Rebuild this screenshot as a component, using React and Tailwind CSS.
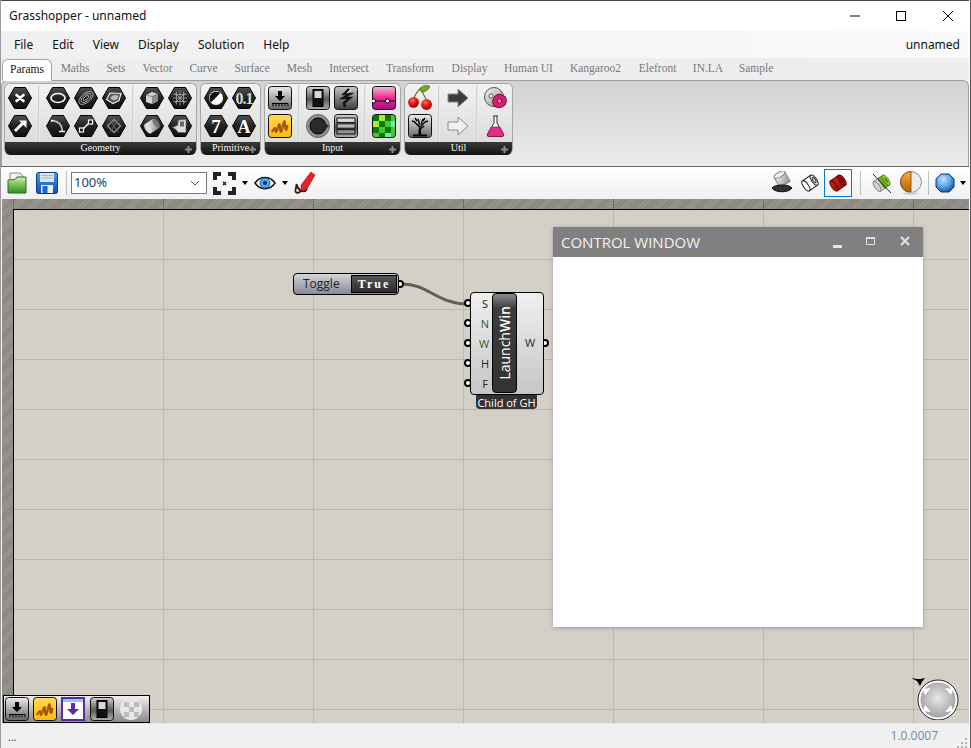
const menus = ["File", "Edit", "View", "Display", "Solution", "Help"];
const tabs = [
  ["Maths", "w-[46px]"],
  ["Sets", "w-[36px]"],
  ["Vector", "w-[47px]"],
  ["Curve", "w-[45px]"],
  ["Surface", "w-[52px]"],
  ["Mesh", "w-[43px]"],
  ["Intersect", "w-[56px]"],
  ["Transform", "w-[66px]"],
  ["Display", "w-[53px]"],
  ["Human UI", "w-[65px]"],
  ["Kangaroo2", "w-[69px]"],
  ["Elefront", "w-[55px]"],
  ["IN.LA", "w-[46px]"],
  ["Sample", "w-[50px]"],
];
const serif = "font-['Liberation_Serif',serif]";

function Defs() {
  return (
    <svg className="absolute w-0 h-0">
      <defs>
        <linearGradient id="hexFill" x1="0" y1="0" x2="0" y2="1">
          <stop offset="0" stopColor="#505050" />
          <stop offset="0.5" stopColor="#222" />
          <stop offset="1" stopColor="#101010" />
        </linearGradient>
        <linearGradient id="greyBtn" x1="0" y1="0" x2="0" y2="1">
          <stop offset="0" stopColor="#ececec" />
          <stop offset="1" stopColor="#666" />
        </linearGradient>
        <linearGradient id="boltBtn" x1="0" y1="0" x2="0" y2="1">
          <stop offset="0" stopColor="#c8c8c8" />
          <stop offset="1" stopColor="#3c3c3c" />
        </linearGradient>
        <linearGradient id="darkBtn" x1="0" y1="0" x2="0" y2="1">
          <stop offset="0" stopColor="#d4d4d4" />
          <stop offset="0.55" stopColor="#5a5a5a" />
          <stop offset="1" stopColor="#b0b0b0" />
        </linearGradient>
        <linearGradient id="yellowBtn" x1="0" y1="0" x2="0" y2="1">
          <stop offset="0" stopColor="#ffdc50" />
          <stop offset="1" stopColor="#fdb90f" />
        </linearGradient>
        <linearGradient id="pinkBtn" x1="0" y1="0" x2="0" y2="1">
          <stop offset="0" stopColor="#eec0d8" />
          <stop offset="0.5" stopColor="#f0258f" />
          <stop offset="1" stopColor="#a01478" />
        </linearGradient>
        <linearGradient id="leafGreen" x1="0" y1="0" x2="0" y2="1">
          <stop offset="0" stopColor="#dfe7dc" />
          <stop offset="0.35" stopColor="#8ed063" />
          <stop offset="1" stopColor="#2f8f22" />
        </linearGradient>
        <linearGradient id="floppy" x1="0" y1="0" x2="0" y2="1">
          <stop offset="0" stopColor="#4d9bea" />
          <stop offset="1" stopColor="#0e4fae" />
        </linearGradient>
        <linearGradient id="redTube" x1="0" y1="0" x2="1" y2="1">
          <stop offset="0" stopColor="#e02a1c" />
          <stop offset="1" stopColor="#8a0400" />
        </linearGradient>
        <linearGradient id="greySolid" x1="0" y1="0" x2="1" y2="1">
          <stop offset="0" stopColor="#f8f8f8" />
          <stop offset="1" stopColor="#8c8c8c" />
        </linearGradient>
        <linearGradient id="orangeBall" x1="0" y1="0" x2="0" y2="1">
          <stop offset="0" stopColor="#f4b040" />
          <stop offset="1" stopColor="#b85a06" />
        </linearGradient>
        <radialGradient id="blueBall" cx="0.4" cy="0.3" r="0.8">
          <stop offset="0" stopColor="#c5e6ff" />
          <stop offset="0.55" stopColor="#4f9fe6" />
          <stop offset="1" stopColor="#123f9c" />
        </radialGradient>
        <radialGradient id="navDisc" cx="0.5" cy="0.45" r="0.55">
          <stop offset="0" stopColor="#e8e8e8" />
          <stop offset="1" stopColor="#a2a2a2" />
        </radialGradient>
        <radialGradient id="cherry" cx="0.4" cy="0.3" r="0.8">
          <stop offset="0" stopColor="#ff6a5a" />
          <stop offset="0.5" stopColor="#dc1414" />
          <stop offset="1" stopColor="#780404" />
        </radialGradient>
      </defs>
    </svg>
  );
}

function Hex({ children }) {
  return (
    <svg width="24" height="22" viewBox="0 0 24 22">
      <polygon points="0.5,11 6.5,0.5 17.5,0.5 23.5,11 17.5,21.5 6.5,21.5" fill="url(#hexFill)" stroke="#000" />
      {children}
    </svg>
  );
}

function Btn({ fill = "url(#greyBtn)", children }) {
  return (
    <svg width="24" height="24" viewBox="0 0 24 24">
      <rect x="0.5" y="0.5" width="23" height="23" rx="3" fill={fill} stroke="#111" />
      {children}
    </svg>
  );
}

const ruler = (
  <path d="M4 17.5h16M5 17.5v3M8 17.5v3M11 17.5v3M14 17.5v3M17 17.5v3M20 17.5v3" stroke="#000" strokeWidth="1" fill="none" />
);

const icons = {
  point: <Hex><path d="M8.5 8l7 6M15.5 8l-7 6" stroke="#fff" strokeWidth="2.6" strokeLinecap="round" /></Hex>,
  vector: <Hex><path d="M7 16L14.500 8.500" stroke="#fff" strokeWidth="3" /><path d="M11 5.500h7.500V13z" fill="#fff" /></Hex>,
  circle: <Hex><ellipse cx="12" cy="11" rx="7" ry="4.500" fill="none" stroke="#fff" strokeWidth="1.600" /></Hex>,
  arc: <Hex><g fill="none" stroke="#b8b8b8" strokeWidth=".8"><ellipse cx="12" cy="11" rx="8.500" ry="4.500" transform="rotate(-40 12 11)" /><ellipse cx="12" cy="11" rx="6" ry="3" transform="rotate(-40 12 11)" /><ellipse cx="12" cy="11" rx="3.500" ry="1.500" transform="rotate(-40 12 11)" /></g></Hex>,
  surface: <Hex><path d="M4.500 12.500L8 6l11 .500 -2 7-6 3z" fill="#555" stroke="#e8e8e8" strokeWidth="1.200" /><path d="M8 11l3.500-3 5 .500-1 3.500-4 1.500z" fill="#bbb" /></Hex>,
  curve: <Hex><path d="M6 5.500c6 .5 10 4 10.500 10.500" fill="none" stroke="#ccc" strokeWidth="1.600" /><path d="M13 16.500h6" stroke="#fff" strokeWidth="1.400" /><path d="M5 4.500l3 1-3 1.500z" fill="#fff" /></Hex>,
  line: <Hex><path d="M8 15L16 7" stroke="#fff" strokeWidth="1.400" /><rect x="5.500" y="13" width="4" height="4" fill="#111" stroke="#fff" strokeWidth="1.200" /><rect x="14.500" y="5" width="4" height="4" fill="#111" stroke="#fff" strokeWidth="1.200" /></Hex>,
  plane: <Hex><path d="M12 4.500l6.500 6.500-6.500 6.500L5.500 11z" fill="none" stroke="#8e8e8e" strokeWidth="1.400" /><path d="M8 4.500l8 13M16 4.500l-8 13" stroke="#666" strokeWidth="1" /></Hex>,
  box: <Hex><path d="M6 8l6-3 6 2v7l-6 3-6-2z" fill="#d4d4d4" /><path d="M12 9.500V17l6-3V7z" fill="#8e8e8e" /><path d="M6 8l6 1.500L18 7" stroke="#555" fill="none" strokeWidth=".6" /></Hex>,
  mesh: <Hex><g stroke="#a8a8a8" strokeWidth=".8" fill="none"><path d="M5 11h14M12 3.500v15M7 6l10 10M17 6L7 16M8.500 4.500v13M15.500 4.500v13M5.500 7.500h13M5.500 14.500h13" /></g></Hex>,
  brep: <Hex><g transform="rotate(-35 12 11)"><rect x="7" y="5.500" width="10" height="11" fill="url(#greySolid)" /><ellipse cx="7" cy="11" rx="2.500" ry="5.500" fill="#ddd" /><ellipse cx="17" cy="11" rx="2.500" ry="5.500" fill="#777" /></g></Hex>,
  geo: <Hex><path d="M4.500 12.500l5-2 1-5.500 7.500-.500v13H10l-2-3z" fill="#ddd" stroke="#666" strokeWidth=".7" /><path d="M12 6.500h4v5h-4z" fill="#666" /></Hex>,
  boolean: <Hex><circle cx="12" cy="11" r="7" fill="#fff" /><path d="M7 15.500c-2.300-3-1.600-6.700.6-9 2.400-2.300 6-2.500 8.700-.5z" fill="#111" /></Hex>,
  number: <Hex><text x="12" y="16.500" textAnchor="middle" fill="#d8d8d8" className={serif} fontSize="16" fontWeight="700" letterSpacing="-1">0.1</text></Hex>,
  integer: <Hex><text x="12" y="18" textAnchor="middle" fill="#fff" className={serif} fontSize="19" fontWeight="700">7</text></Hex>,
  text: <Hex><text x="12" y="17.500" textAnchor="middle" fill="#fff" className={serif} fontSize="18" fontWeight="700">A</text></Hex>,
  slider: <Btn>{ruler}<path d="M10 5h4v5h3l-5 5-5-5h3z" fill="#000" /></Btn>,
  scribble: <Btn fill="url(#yellowBtn)"><path d="M4 18c1-2 2-4 3-4 1 0 0 4 1 4 1.500 0 2-8 3.500-8 1 0 0 8 1.500 8 1.500 0 2-11 3.500-11 1 0 0 9 1.500 9 .8 0 1-3 1.500-5" fill="none" stroke="#a8560c" strokeWidth="2.200" strokeLinejoin="round" /></Btn>,
  toggle: <Btn fill="url(#darkBtn)"><rect x="7" y="3.500" width="10" height="17" fill="#111" stroke="#000" /><rect x="8.500" y="5" width="7" height="7" fill="#d8d8d8" /></Btn>,
  bolt: <Btn fill="url(#boltBtn)"><path d="M15 3l-5 5h6l-7 4h7l-6 5 1 4" fill="none" stroke="#111" strokeWidth="2.400" /><path d="M17 4l-4 3" stroke="#fff" strokeWidth="1" /></Btn>,
  gradient: <Btn fill="url(#pinkBtn)"><path d="M0 15h24" stroke="#111" /><circle cx="1.500" cy="15" r="2" fill="#fff" stroke="#000" /><circle cx="15.500" cy="15" r="2" fill="#fff" stroke="#000" /></Btn>,
  dial: (
    <svg width="24" height="24" viewBox="0 0 24 24">
      <circle cx="12" cy="12" r="11.500" fill="#8e8e8e" stroke="#666" />
      <circle cx="12" cy="12" r="8" fill="#2a2a2a" stroke="#000" />
      <path d="M18 8l5 4-5 4z" fill="#2a2a2a" />
    </svg>
  ),
  list: <Btn fill="url(#darkBtn)"><rect x="3" y="4" width="18" height="4.400" fill="#dcdcdc" stroke="#111" /><rect x="3" y="9.800" width="18" height="4.400" fill="#b5b5b5" stroke="#111" /><rect x="3" y="15.600" width="18" height="4.400" fill="#8e8e8e" stroke="#111" /></Btn>,
  checker: (
    <Btn fill="#46c832">
      <path d="M1 1h6v6H1zM13 1h6v6h-6zM7 7h6v6H7zM1 13h6v6H1zM13 13h6v6h-6zM7 19h6v4H7z" fill="#0d7a06" />
      <path d="M19 7h4v6h-4zM13 19h6v4h-6z" fill="#6ce8a8" />
      <path d="M7 1h6v6H7zM1 7h6v6H1z" fill="#a8ec2a" />
    </Btn>
  ),
  cherry: (
    <svg width="26" height="26" viewBox="0 0 24 24">
      <path d="M6 13C8 8 10 5 13 3c1 4 3 7 5 11" fill="none" stroke="#5d6b22" strokeWidth="1" />
      <path d="M12 3c3-3 7-3 9-2-1 4-5 6-8 5z" fill="#74a92a" stroke="#2b5a10" strokeWidth=".6" />
      <circle cx="6" cy="16" r="5" fill="url(#cherry)" />
      <circle cx="18" cy="18" r="5" fill="url(#cherry)" />
    </svg>
  ),
  tree: (
    <Btn fill="url(#greyBtn)">
      <path d="M11 21l.6-8-5-5M12 13l5-5M12.600 21l-.4-6 4-3M11.600 11L10 5M13 10l2-5M7 8L4 7M17 8l3-1M9 7L7 4M15 7l2-3" fill="none" stroke="#000" strokeWidth="1.400" />
      <path d="M5 21.500h14" stroke="#000" strokeWidth="2" />
    </Btn>
  ),
  arrowDark: (
    <svg width="24" height="24" viewBox="0 0 24 24">
      <path d="M2 8h10V3l10 9-10 9v-5H2z" fill="#3c3c3c" stroke="#888" />
    </svg>
  ),
  arrowLight: (
    <svg width="24" height="24" viewBox="0 0 24 24">
      <path d="M2 8h10V3l10 9-10 9v-5H2z" fill="#f0f0f0" stroke="#8c8c8c" />
    </svg>
  ),
  disc: (
    <svg width="24" height="24" viewBox="0 0 24 24">
      <circle cx="10" cy="11" r="9.500" fill="url(#greySolid)" stroke="#555" />
      <circle cx="7" cy="10" r="2" fill="#fff" stroke="#555" />
      <ellipse cx="15.500" cy="15" rx="7" ry="6.500" transform="rotate(-35 15.500 15)" fill="#d81f72" stroke="#6d0c3c" />
      <circle cx="15.500" cy="15" r="2.200" fill="#f8a" stroke="#6d0c3c" />
    </svg>
  ),
  flask: (
    <svg width="24" height="24" viewBox="0 0 24 24">
      <path d="M9 2h5M10 2v7L3.500 20c-.6 1.500 0 2.500 1.500 2.500h13c1.500 0 2-1 1.500-2.500L13 9V2" fill="#f4f4f4" stroke="#333" />
      <path d="M7 13h9l3.500 7.500c.4 1 0 2-1.500 2H5c-1.500 0-2-1-1.500-2z" fill="#e32c86" stroke="#7a1048" strokeWidth=".6" />
    </svg>
  ),
};

function Sep() {
  return <div className="w-[2px] mx-[4px] my-[1px] bg-gradient-to-r from-[#c4c4c4] to-[#f6f6f6]" />;
}

function Col({ top, bottom }) {
  return (
    <div className="w-[28px] flex flex-col">
      <div className="h-[28px] flex items-center justify-center">{icons[top]}</div>
      <div className="h-[28px] flex items-center justify-center">{icons[bottom]}</div>
    </div>
  );
}

function Panel({ label, className, children }) {
  return (
    <div className={`flex flex-col h-[72px] rounded-[6px] overflow-hidden border-x border-t border-[#a6a6a6] ${className}`}>
      <div className="h-[58px] pl-[1px] pr-[2px] flex bg-gradient-to-b from-[#f2f2f2] to-[#dcdcdc]">{children}</div>
      <div className="h-[13px] relative flex items-center justify-center bg-gradient-to-b from-[#3a3a3a] to-[#141414]">
        <span className={`${serif} text-[10px] leading-none text-[#f2f2f2] -mt-[1px]`}>{label}</span>
        <svg className="absolute right-[3px] top-[3px]" width="9" height="9" viewBox="0 0 9 9">
          <path d="M4.500 1v7M1 4.500h7" stroke="#8c8c8c" strokeWidth="2" />
        </svg>
      </div>
    </div>
  );
}

function Tube({ body, top, stroke }) {
  return (
    <svg width="24" height="24" viewBox="0 0 24 24">
      <g transform="rotate(-35 12 12)">
        <rect x="7" y="6" width="10" height="12" fill={body} stroke={stroke} />
        <ellipse cx="7" cy="12" rx="2.500" ry="6" fill={body} stroke={stroke} />
        <ellipse cx="17" cy="12" rx="2.500" ry="6" fill={top} stroke={stroke} />
        <ellipse cx="17" cy="12" rx="1.200" ry="3" fill={body} stroke={stroke} />
      </g>
    </svg>
  );
}

function Caret({ className }) {
  return <div className={`w-0 h-0 border-x-[3.500px] border-t-[4px] border-x-transparent border-t-black ${className}`} />;
}

function TitleBar() {
  return (
    <div className="h-[31px] shrink-0 bg-white border-t border-[#444] flex items-center pl-[8px] pb-[1px]">
      <span className="text-[12px] text-[#111]">Grasshopper - unnamed</span>
      <div className="ml-auto flex items-center">
        <svg width="46" height="30" viewBox="0 0 46 30"><path d="M19 15h10" stroke="#000" /></svg>
        <svg width="46" height="30" viewBox="0 0 46 30"><rect x="19.500" y="10.500" width="9" height="9" fill="none" stroke="#000" /></svg>
        <svg width="46" height="30" viewBox="0 0 46 30"><path d="M20 10l10 10M30 10L20 20" stroke="#000" /></svg>
      </div>
    </div>
  );
}

function MenuBar() {
  return (
    <div className="h-[27px] shrink-0 bg-gradient-to-r from-[#f0f0f0] to-[#fafafa] flex items-center pl-[13px] pr-[9px]">
      <div className="flex gap-[19px] text-[12px] text-[#111]">
        {menus.map((m) => (
          <span key={m}>{m}</span>
        ))}
      </div>
      <span className="ml-auto text-[12px] text-[#111]">unnamed</span>
    </div>
  );
}

function Tabs() {
  return (
    <div className={`h-[22px] shrink-0 bg-[#eeeeee] flex items-end pl-[1px] ${serif} text-[11.500px] text-[#7a7a7a]`}>
      <div className="relative z-10 -mb-[1px] w-[50px] h-[22px] bg-white border-x border-t border-[#a4a4a4] rounded-t-[6px] flex items-center justify-center text-[#111] border-b border-b-white">
        Params
      </div>
      {tabs.map(([label, w]) => (
        <div key={label} className={`${w} h-[22px] flex items-center justify-center`}>
          {label}
        </div>
      ))}
    </div>
  );
}

function Ribbon() {
  return (
    <div className="h-[86px] shrink-0 rounded-t-[6px] border-t border-x border-[#a0a0a0] bg-gradient-to-b from-[#d2d2d2] to-[#ececec] flex items-start pt-[2px] pl-[2px]">
      <Panel label="Geometry">
        <Col top="point" bottom="vector" />
        <Sep />
        <Col top="circle" bottom="curve" />
        <Col top="arc" bottom="line" />
        <Col top="surface" bottom="plane" />
        <Sep />
        <Col top="box" bottom="brep" />
        <Col top="mesh" bottom="geo" />
      </Panel>
      <Panel label="Primitive" className="ml-[3px]">
        <Col top="boolean" bottom="integer" />
        <Col top="number" bottom="text" />
      </Panel>
      <Panel label="Input" className="ml-[3px]">
        <Col top="slider" bottom="scribble" />
        <Sep />
        <Col top="toggle" bottom="dial" />
        <Col top="bolt" bottom="list" />
        <Sep />
        <Col top="gradient" bottom="checker" />
      </Panel>
      <Panel label="Util" className="ml-[3px]">
        <Col top="cherry" bottom="tree" />
        <Sep />
        <Col top="arrowDark" bottom="arrowLight" />
        <Sep />
        <Col top="disc" bottom="flask" />
      </Panel>
    </div>
  );
}

function Toolbar() {
  return (
    <div className="h-[33px] shrink-0 border-t border-[#666] bg-gradient-to-b from-white to-[#f0f0f0] flex items-center pl-[6px] pr-[3px]">
      <svg width="20" height="22" viewBox="0 0 20 22">
        <path d="M3 1h10l3 3v6H3z" fill="#f2f2f2" stroke="#888" />
        <path d="M1 8l7-.500 2-2.500h9v16H1z" fill="url(#leafGreen)" stroke="#2a6d1c" />
      </svg>
      <svg className="ml-[9px]" width="22" height="22" viewBox="0 0 22 22">
        <rect x="0.500" y="0.500" width="21" height="21" rx="2" fill="url(#floppy)" stroke="#0a3a8c" />
        <rect x="4" y="1" width="14" height="9" fill="#dfe6ee" />
        <path d="M5 3.500h12M5 6h12" stroke="#a8b4c4" />
        <rect x="5" y="13" width="12" height="8" fill="#e8edf4" />
        <rect x="6.500" y="14" width="5" height="7" fill="#1e66c8" />
      </svg>
      <div className="ml-[8px] w-[1px] h-[24px] bg-[#bdbdbd]" />
      <div className="ml-[4px] w-[136px] h-[22px] bg-white border border-[#7a7a7a] flex items-center pl-[2px] pr-[6px] text-[13px] text-[#1c3f6e]">
        100%
        <svg className="ml-auto" width="10" height="6" viewBox="0 0 10 6">
          <path d="M1 1l4 4 4-4" fill="none" stroke="#555" />
        </svg>
      </div>
      <svg className="ml-[6px]" width="23" height="23" viewBox="0 0 23 23">
        <path d="M2 8V2h6M15 2h6v6M2 15v6h6M15 21h6v-6" fill="none" stroke="#222" strokeWidth="4" />
        <path d="M10 10l3 3M13 10l-3 3" stroke="#222" strokeWidth="1.500" />
      </svg>
      <Caret className="ml-[6px]" />
      <svg className="ml-[6px]" width="22" height="18" viewBox="0 0 22 18">
        <path d="M1 9c5-7.500 15-7.500 20 0-5 7.500-15 7.500-20 0z" fill="#fff" stroke="#111" strokeWidth="1.500" />
        <circle cx="11" cy="9" r="5" fill="#46aee8" stroke="#0f5f96" />
        <circle cx="11" cy="9" r="2" fill="#04233c" />
      </svg>
      <Caret className="ml-[6px]" />
      <svg className="ml-[6px]" width="22" height="24" viewBox="0 0 22 24">
        <path d="M7 14L17 1l4 3-8 14-6 2z" fill="#e42424" stroke="#9a1010" strokeWidth=".6" />
        <path d="M7 20c-3 3-6 2-5.500-1 .4-2 1-4 1-6 .5 3 1.500 5 4.500 7 3 1 5 0 6-2" fill="none" stroke="#4a140e" strokeWidth="1.800" />
      </svg>

      <div className="ml-auto flex items-center">
        <svg width="22" height="24" viewBox="0 0 22 24">
          <g transform="rotate(-30 11 8)"><rect x="5" y="3" width="12" height="11" fill="url(#greySolid)" stroke="#888" /><ellipse cx="11" cy="3" rx="6" ry="2.500" fill="#eee" stroke="#888" /></g>
          <path d="M1 17c3-4 17-4 20 0-3 5-17 5-20 0z" fill="#333" stroke="#111" />
        </svg>
        <div className="ml-[5px]"><Tube body="#fff" top="#f4f4f4" stroke="#222" /></div>
        <div className="ml-[2px] w-[28px] h-[28px] border border-[#0078d7] flex items-center justify-center">
          <Tube body="url(#redTube)" top="#c61510" stroke="#5c0400" />
        </div>
        <div className="ml-[8px] w-[1px] h-[24px] bg-[#bdbdbd]" />
        <svg className="ml-[9px]" width="24" height="24" viewBox="0 0 24 24">
          <g transform="rotate(-35 12 12)">
            <rect x="6" y="6" width="7" height="12" fill="#d4d4d4" stroke="#555" strokeWidth=".6" />
            <ellipse cx="6" cy="12" rx="2.500" ry="6" fill="#cfcfcf" stroke="#555" strokeWidth=".6" />
            <rect x="11" y="6" width="6" height="12" fill="#6fb01c" stroke="#2a5a08" strokeWidth=".6" />
            <ellipse cx="17" cy="12" rx="2.500" ry="6" fill="#96d030" stroke="#2a5a08" strokeWidth=".6" />
            <ellipse cx="17" cy="12" rx="1.200" ry="3" fill="#4e8a10" />
          </g>
          <path d="M3 3l18 19" stroke="#222" />
        </svg>
        <svg className="ml-[5px]" width="24" height="24" viewBox="0 0 24 24">
          <circle cx="12" cy="11" r="10.500" fill="#ececec" stroke="#777" strokeWidth=".8" />
          <path d="M12 .500a10.500 10.500 0 0 0 0 21z" fill="url(#orangeBall)" stroke="#7a4008" strokeWidth=".8" />
          <ellipse cx="12" cy="22.500" rx="8" ry="1.200" fill="#ccc" />
        </svg>
        <div className="ml-[5px] w-[1px] h-[24px] bg-[#bdbdbd]" />
        <svg className="ml-[6px]" width="20" height="20" viewBox="0 0 20 20">
          <polygon points="6,1 14,1 19,6 19,14 14,19 6,19 1,14 1,6" fill="url(#blueBall)" stroke="#15307c" />
        </svg>
        <Caret className="ml-[5px]" />
      </div>
    </div>
  );
}

function Port({ className }) {
  return <div className={`absolute w-[8px] h-[8px] rounded-full bg-white border-2 border-black ${className}`} />;
}

function Toggle() {
  return (
    <div className="absolute left-[279px] top-[63px]">
      <Port className="left-[103px] top-[7px]" />
      <div className="relative w-[106px] h-[22px] rounded-[4px] border border-black bg-gradient-to-b from-[#d4d4da] to-[#8a8a98] flex items-center justify-between pl-[9px] pr-[1px]">
        <span className="text-[12px] text-[#222] font-['Open_Sans',sans-serif]">Toggle</span>
        <span className={`w-[46px] h-[18px] bg-gradient-to-b from-[#555] to-[#2e2e2e] border border-black flex items-center justify-center text-[12px] font-bold tracking-[2px] text-white ${serif}`}>
          True
        </span>
      </div>
    </div>
  );
}

function LaunchNode() {
  return (
    <div className="absolute left-[456px] top-[82px]">
      <Port className="-left-[6px] top-[7px]" />
      <Port className="-left-[6px] top-[27px]" />
      <Port className="-left-[6px] top-[47px]" />
      <Port className="-left-[6px] top-[67px]" />
      <Port className="-left-[6px] top-[87px]" />
      <Port className="left-[71px] top-[47px]" />
      <div className="relative w-[74px] h-[103px] rounded-[4px] border border-black bg-gradient-to-b from-[#f0f0f0] to-[#c6c6c6] flex font-['Open_Sans',sans-serif] text-[11px] text-[#222]">
        <div className="w-[21px] flex flex-col items-end pr-[2px] pt-[1px]">
          <span className="h-[20px] leading-[20px] w-[10px] text-center">S</span>
          <span className="h-[20px] leading-[20px] w-[10px] text-center text-[#2d5a2d]">N</span>
          <span className="h-[20px] leading-[20px] w-[12px] text-center text-[#2d5a2d]">W</span>
          <span className="h-[20px] leading-[20px] w-[10px] text-center">H</span>
          <span className="h-[20px] leading-[20px] w-[10px] text-center">F</span>
        </div>
        <div className="w-[25px] h-[100px] rounded-[4px] border border-black bg-gradient-to-b from-[#8c8c8c] via-[#3c3c3c] via-15% to-[#333] flex items-center justify-center">
          <span className="[writing-mode:vertical-rl] rotate-180 text-[14px] leading-none text-white">
            Launch<span className="font-semibold">Win</span>
          </span>
        </div>
        <div className="flex-1 flex items-center justify-center">W</div>
      </div>
    </div>
  );
}

function ControlWindow() {
  return (
    <div className="absolute left-[539px] top-[17px] w-[370px] h-[400px] bg-white flex flex-col shadow-[0_1px_4px_rgba(0,0,0,0.25)]">
      <div className="h-[30px] bg-[#808080] flex items-center pl-[8px] pr-[12px]">
        <span className="text-[15px] text-[#f2f2f2] font-['Open_Sans',sans-serif]">CONTROL WINDOW</span>
        <svg className="ml-auto" width="78" height="14" viewBox="0 0 78 14">
          <path d="M0 10h9v3H0z" fill="#e4e4e4" />
          <path d="M33.500 2.500h8v7h-8z" fill="none" stroke="#e4e4e4" />
          <path d="M33.500 3h8" stroke="#e4e4e4" strokeWidth="2" />
          <path d="M68 2l8 8M76 2l-8 8" stroke="#e4e4e4" strokeWidth="2" />
        </svg>
      </div>
    </div>
  );
}

function NavWidget() {
  return (
    <div className="absolute left-[896px] top-[466px]">
      <svg width="50" height="44" viewBox="0 0 50 44">
        <path d="M1 2l6 1 3 0 5-1-3 4-2 4-3-5z" fill="#000" />
        <circle cx="28" cy="24" r="20" fill="#fff" stroke="#222" strokeWidth="1" />
        <circle cx="28" cy="24" r="17.500" fill="url(#navDisc)" />
        <path d="M13 13l8-1-6 7zM43 13l-8-1 6 7zM13 35l8 1-6-7zM43 35l-8 1 6-7z" fill="#fff" />
      </svg>
    </div>
  );
}

function Canvas() {
  return (
    <div className="relative flex-1 min-h-0 flex flex-col pl-[1px] bg-[#f0f0f0]">
      <div className="h-[10px] shrink-0 bg-[linear-gradient(to_right,#6f6d67_1px,transparent_1px),repeating-linear-gradient(135deg,#9b9991_0,#9b9991_1px,#85837c_1px,#85837c_2px)] bg-size-[150px_100%,auto] bg-position-[11px_0,0_0]" />
      <div className="flex-1 min-h-0 flex">
        <div className="w-[11px] shrink-0 bg-[repeating-linear-gradient(135deg,#9b9991_0,#9b9991_1px,#85837c_1px,#85837c_2px)]" />
        <div className="relative flex-1 overflow-hidden border-l border-t border-black bg-[#d4d0c8] bg-[linear-gradient(to_right,#bdb9b1_1px,transparent_1px),linear-gradient(to_bottom,#bdb9b1_1px,transparent_1px)] bg-size-[150px_50px] bg-position-[-1px_-1px]">
          <svg className="absolute left-[385px] top-[70px]" width="75" height="30" viewBox="0 0 75 30">
            <path d="M3 4C30 4 36 23 68 24" fill="none" stroke="#605f5a" strokeWidth="3" />
          </svg>
          <Toggle />
          <LaunchNode />
          <div className="absolute left-[462px] top-[185px] w-[61px] h-[14px] rounded-b-[4px] bg-[#333] flex items-center justify-center text-[11px] leading-none text-white font-['Open_Sans',sans-serif] whitespace-nowrap">
            Child of GH
          </div>
          <ControlWindow />
          <NavWidget />
        </div>
      </div>
      <div className="absolute left-[2px] bottom-0 w-[147px] h-[28px] border border-black bg-gradient-to-b from-[#f0f0f0] to-[#8a8a8a] flex items-center pl-[1px]">
        {icons.slider}
        <div className="ml-[4px]">{icons.scribble}</div>
        <svg className="ml-[4px]" width="24" height="24" viewBox="0 0 24 24">
          <rect x="1" y="1" width="22" height="22" fill="#fff" stroke="#5a2ca0" strokeWidth="2" />
          <path d="M2 2h20v3H2z" fill="#8ec8f0" />
          <path d="M10 6h4v6h4l-6 6-6-6h4z" fill="#5a2ca0" />
        </svg>
        <div className="ml-[5px]">{icons.toggle}</div>
        <svg className="ml-[4px]" width="26" height="24" viewBox="0 0 26 24">
          <circle cx="13" cy="12" r="11" fill="#e8e8e8" />
          <path d="M6 5h5v5H6zM16 5h5v5h-5zM11 10h5v5h-5zM6 15h5v5H6zM16 15h5v5h-5z" fill="#bcbcbc" />
        </svg>
      </div>
    </div>
  );
}

function StatusBar() {
  return (
    <div className="h-[25px] shrink-0 bg-[#f0f0f0] border-t border-[#e4e4e4] flex items-center pl-[7px] pr-[1px] font-['Open_Sans',sans-serif]">
      <span className="text-[11px] text-[#333] leading-none">...</span>
      <span className="ml-auto text-[12px] text-[#6d8bab]">1.0.0007</span>
      <svg className="ml-[19px] mt-[12px]" width="11" height="11" viewBox="0 0 11 11">
        <path d="M8 1h2v2H8zM4 5h2v2H4zM8 5h2v2H8zM0 9h2v2H0zM4 9h2v2H4zM8 9h2v2H8z" fill="#b4b4b4" />
      </svg>
    </div>
  );
}

export default function App() {
  return (
    <div className="w-[971px] h-[748px] overflow-hidden flex flex-col bg-white border-l border-r border-l-[#9a9a9a] border-r-[#555] pr-[1px] font-['Noto_Sans',sans-serif]">
      <Defs />
      <TitleBar />
      <MenuBar />
      <Tabs />
      <Ribbon />
      <Toolbar />
      <Canvas />
      <StatusBar />
    </div>
  );
}
